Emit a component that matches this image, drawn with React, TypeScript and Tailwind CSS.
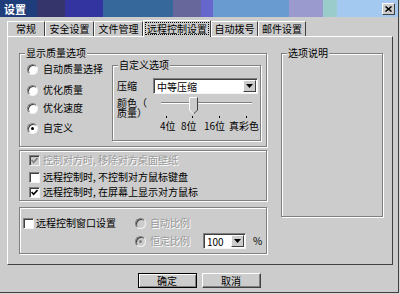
import React from "react";

function Group({ legend, className = "", children }: { legend?: string; className?: string; children?: React.ReactNode }) {
  return (
    <div className={`relative border border-[#808080] shadow-[inset_1px_1px_0_#ffffff,1px_1px_0_#ffffff] ${className}`}>
      {legend && (
        <span className="absolute left-[5px] top-[-7px] bg-[#cccccc] px-[1px] text-[10px] leading-[12px]">{legend}</span>
      )}
      {children}
    </div>
  );
}

function Radio({ checked = false, disabled = false }: { checked?: boolean; disabled?: boolean }) {
  return (
    <span
      className={`relative block w-[11px] h-[11px] shrink-0 rounded-full border border-t-[#808080] border-l-[#808080] border-r-[#f4f4f4] border-b-[#f4f4f4] shadow-[inset_1px_1px_0_#404040] ${
        disabled ? "bg-[#cccccc]" : "bg-white"
      }`}
    >
      {checked && (
        <span className={`absolute left-[3px] top-[3px] w-[3px] h-[3px] rounded-full ${disabled ? "bg-[#808080]" : "bg-black"}`} />
      )}
    </span>
  );
}

function Check({ checked = false, disabled = false }: { checked?: boolean; disabled?: boolean }) {
  return (
    <span
      className={`flex items-center justify-center w-[11px] h-[11px] shrink-0 border border-t-[#808080] border-l-[#808080] border-r-[#f4f4f4] border-b-[#f4f4f4] shadow-[inset_1px_1px_0_#404040] ${
        disabled ? "bg-[#cccccc]" : "bg-white"
      }`}
    >
      {checked && (
        <svg width="7" height="7" viewBox="0 0 7 7">
          <path d="M0.6 3 L2.6 5.2 L6.5 1" fill="none" stroke={disabled ? "#808080" : "#000"} strokeWidth="1.6" />
        </svg>
      )}
    </span>
  );
}

function Select({ value, className = "" }: { value: string; className?: string }) {
  return (
    <div
      className={`flex items-stretch h-[16px] bg-white border border-t-[#808080] border-l-[#808080] border-r-[#f4f4f4] border-b-[#f4f4f4] shadow-[inset_1px_1px_0_#404040] ${className}`}
    >
      <span className="flex-1 pl-[3px] pt-[1px] text-[10px] leading-[13px]">{value}</span>
      <span className="flex items-center justify-center w-[13px] my-[1px] mr-[1px] bg-[#cccccc] border border-t-white border-l-white border-r-[#404040] border-b-[#404040]">
        <svg width="7" height="4" viewBox="0 0 7 4">
          <path d="M0 0h7L3.5 4z" fill="#000" />
        </svg>
      </span>
    </div>
  );
}

const dis = "text-[#9a9a9a] [text-shadow:1px_1px_0_#ffffff]";

function Tab({ label, w, selected = false }: { label: string; w: string; selected?: boolean }) {
  return (
    <div
      className={`flex items-center justify-center border-t border-l border-t-white border-l-white border-r border-r-[#404040] ${w} ${
        selected ? "h-[17px] -mb-px relative z-10 bg-[#cccccc] pb-[1px]" : "h-[15px]"
      }`}
    >
      {selected ? (
        <span className="border border-dotted border-black px-[1px] h-[13px] leading-[11px]">{label}</span>
      ) : (
        <span className="leading-[12px]">{label}</span>
      )}
    </div>
  );
}

export default function App() {
  return (
    <div className="w-[400px] h-[294px] bg-[#d6d6d6] font-['Noto_Sans_CJK_SC',sans-serif] text-[10px] text-black">
      <div className="w-[399px] h-[293px] bg-[#cccccc] border-r border-b border-[#404040] flex flex-col">
        {/* Title bar */}
        <div className="h-[17px] flex items-center justify-between pl-[4px] pr-[3px] bg-[linear-gradient(to_right,#1f3d7a_0_37px,#35356b_37px_65px,#3434a0_65px_103px,#36689c_103px_173px,#67679c_173px_201px,#6666cc_201px_213px,#6a9bd0_213px_289px,#9a9acf_289px_323px,#9acccb_323px_337px,#a3c9f0_337px)]">
          <span className="text-white font-bold text-[11px] leading-[12px]">设置</span>
          <span className="flex items-center justify-center w-[13px] h-[12px] bg-[#cccccc] border border-t-white border-l-white border-r-[#404040] border-b-[#404040]">
            <svg width="7" height="6" viewBox="0 0 7 6">
              <path d="M0.5 0.5 L6.5 5.5 M6.5 0.5 L0.5 5.5" stroke="#000" strokeWidth="1.5" />
            </svg>
          </span>
        </div>

        {/* Tabs */}
        <div className="mt-[4px] ml-[7px] h-[15px] flex items-end">
          <Tab label="常规" w="w-[38px]" />
          <Tab label="安全设置" w="w-[49px]" />
          <Tab label="文件管理" w="w-[49px]" />
          <Tab label="远程控制设置" w="w-[68px]" selected />
          <Tab label="自动拨号" w="w-[47px]" />
          <Tab label="邮件设置" w="w-[48px]" />
        </div>

        {/* Panel */}
        <div className="ml-[7px] w-[386px] h-[229px] border-t border-l border-t-white border-l-white border-r border-b border-r-[#404040] border-b-[#404040] flex pt-[16px] pl-[11px]">
          <div className="flex flex-col w-[248px]">
            {/* Group 1 */}
            <Group legend="显示质量选项" className="w-[248px] h-[94px] flex">
              <div className="w-[92px] pl-[7px] flex flex-col">
                <div className="mt-[9px] flex items-center gap-[5px] h-[12px]">
                  <Radio />
                  <span className="leading-[12px]">自动质量选择</span>
                </div>
                <div className="mt-[9px] flex items-center gap-[5px] h-[12px]">
                  <Radio />
                  <span className="leading-[12px]">优化质量</span>
                </div>
                <div className="mt-[6px] flex items-center gap-[5px] h-[12px]">
                  <Radio />
                  <span className="leading-[12px]">优化速度</span>
                </div>
                <div className="mt-[8px] flex items-center gap-[5px] h-[12px]">
                  <Radio checked />
                  <span className="leading-[12px]">自定义</span>
                </div>
              </div>
              <Group legend="自定义选项" className="mt-[11px] w-[149px] h-[76px] flex flex-col pl-[4px]">
                <div className="mt-[12px] flex items-center">
                  <span className="w-[36px] leading-[12px]">压缩</span>
                  <Select value="中等压缩" className="w-[105px]" />
                </div>
                <div className="mt-[2px] flex">
                  <div className="w-[44px] mt-[2px]">
                    <span className="block w-[31px] leading-[10px] [line-break:anywhere]">颜色（质量）</span>
                  </div>
                  <div className="flex flex-col">
                    <svg width="100" height="25" viewBox="0 0 100 25">
                      <rect x="1" y="6" width="91" height="1" fill="#808080" />
                      <rect x="1" y="7" width="91" height="1" fill="#ffffff" />
                      <polygon points="29.5,1.5 37.5,1.5 37.5,14 33.5,18 29.5,14" fill="#cccccc" />
                      <polyline points="29.5,14 29.5,1.5 37.5,1.5" fill="none" stroke="#ffffff" strokeWidth="1" />
                      <polyline points="37.5,1.5 37.5,14 33.5,18" fill="none" stroke="#404040" strokeWidth="1" />
                      <line x1="29.5" y1="14" x2="33.5" y2="18" stroke="#ffffff" strokeWidth="1" />
                      <line x1="6.5" y1="20" x2="6.5" y2="22" stroke="#000" />
                      <line x1="32.5" y1="20" x2="32.5" y2="22" stroke="#000" />
                      <line x1="59.5" y1="20" x2="59.5" y2="22" stroke="#000" />
                      <line x1="86.5" y1="20" x2="86.5" y2="22" stroke="#000" />
                    </svg>
                    <div className="flex leading-[10px]">
                      <span className="w-[21px]">4位</span>
                      <span className="w-[23px]">8位</span>
                      <span className="w-[25px]">16位</span>
                      <span>真彩色</span>
                    </div>
                  </div>
                </div>
              </Group>
            </Group>

            {/* Group 2 */}
            <Group className="mt-[3px] w-[248px] h-[51px] flex flex-col pl-[9px] pt-[3px]">
              <div className="flex items-center gap-[3px] h-[12px]">
                <Check checked disabled />
                <span className={`leading-[12px] ${dis}`}>控制对方时, 移除对方桌面壁纸</span>
              </div>
              <div className="mt-[5px] flex items-center gap-[3px] h-[12px]">
                <Check />
                <span className="leading-[12px]">远程控制时, 不控制对方鼠标键盘</span>
              </div>
              <div className="mt-[3px] flex items-center gap-[3px] h-[12px]">
                <Check checked />
                <span className="leading-[12px]">远程控制时, 在屏幕上显示对方鼠标</span>
              </div>
            </Group>

            {/* Group 3 */}
            <Group className="mt-[6px] w-[248px] h-[47px] flex pl-[3px] pt-[9px]">
              <div className="w-[112px] h-[12px] flex items-center gap-[2px]">
                <Check />
                <span className="leading-[12px]">远程控制窗口设置</span>
              </div>
              <div className="flex flex-col">
                <div className="flex items-center gap-[4px] h-[12px]">
                  <Radio disabled />
                  <span className={`leading-[12px] ${dis}`}>自动比例</span>
                </div>
                <div className="mt-[4px] flex items-center h-[16px]">
                  <Radio checked disabled />
                  <span className={`ml-[4px] leading-[12px] ${dis}`}>恒定比例</span>
                  <Select value="100" className="ml-[13px] w-[43px]" />
                  <span className="ml-[7px] leading-[12px]">%</span>
                </div>
              </div>
            </Group>
          </div>

          {/* Right description group */}
          <Group legend="选项说明" className="ml-[14px] w-[102px] h-[164px]" />
        </div>

        {/* Buttons */}
        <div className="mt-[8px] flex justify-center gap-[5px]">
          <button className="w-[59px] h-[15px] flex items-center justify-center border border-black bg-[#cccccc] shadow-[inset_1px_1px_0_#ffffff,inset_-1px_-1px_0_#808080] leading-[12px]">
            确定
          </button>
          <button className="w-[59px] h-[15px] flex items-center justify-center bg-[#cccccc] border border-t-white border-l-white border-r-[#404040] border-b-[#404040] shadow-[inset_-1px_-1px_0_#808080] leading-[12px]">
            取消
          </button>
        </div>
      </div>
    </div>
  );
}
